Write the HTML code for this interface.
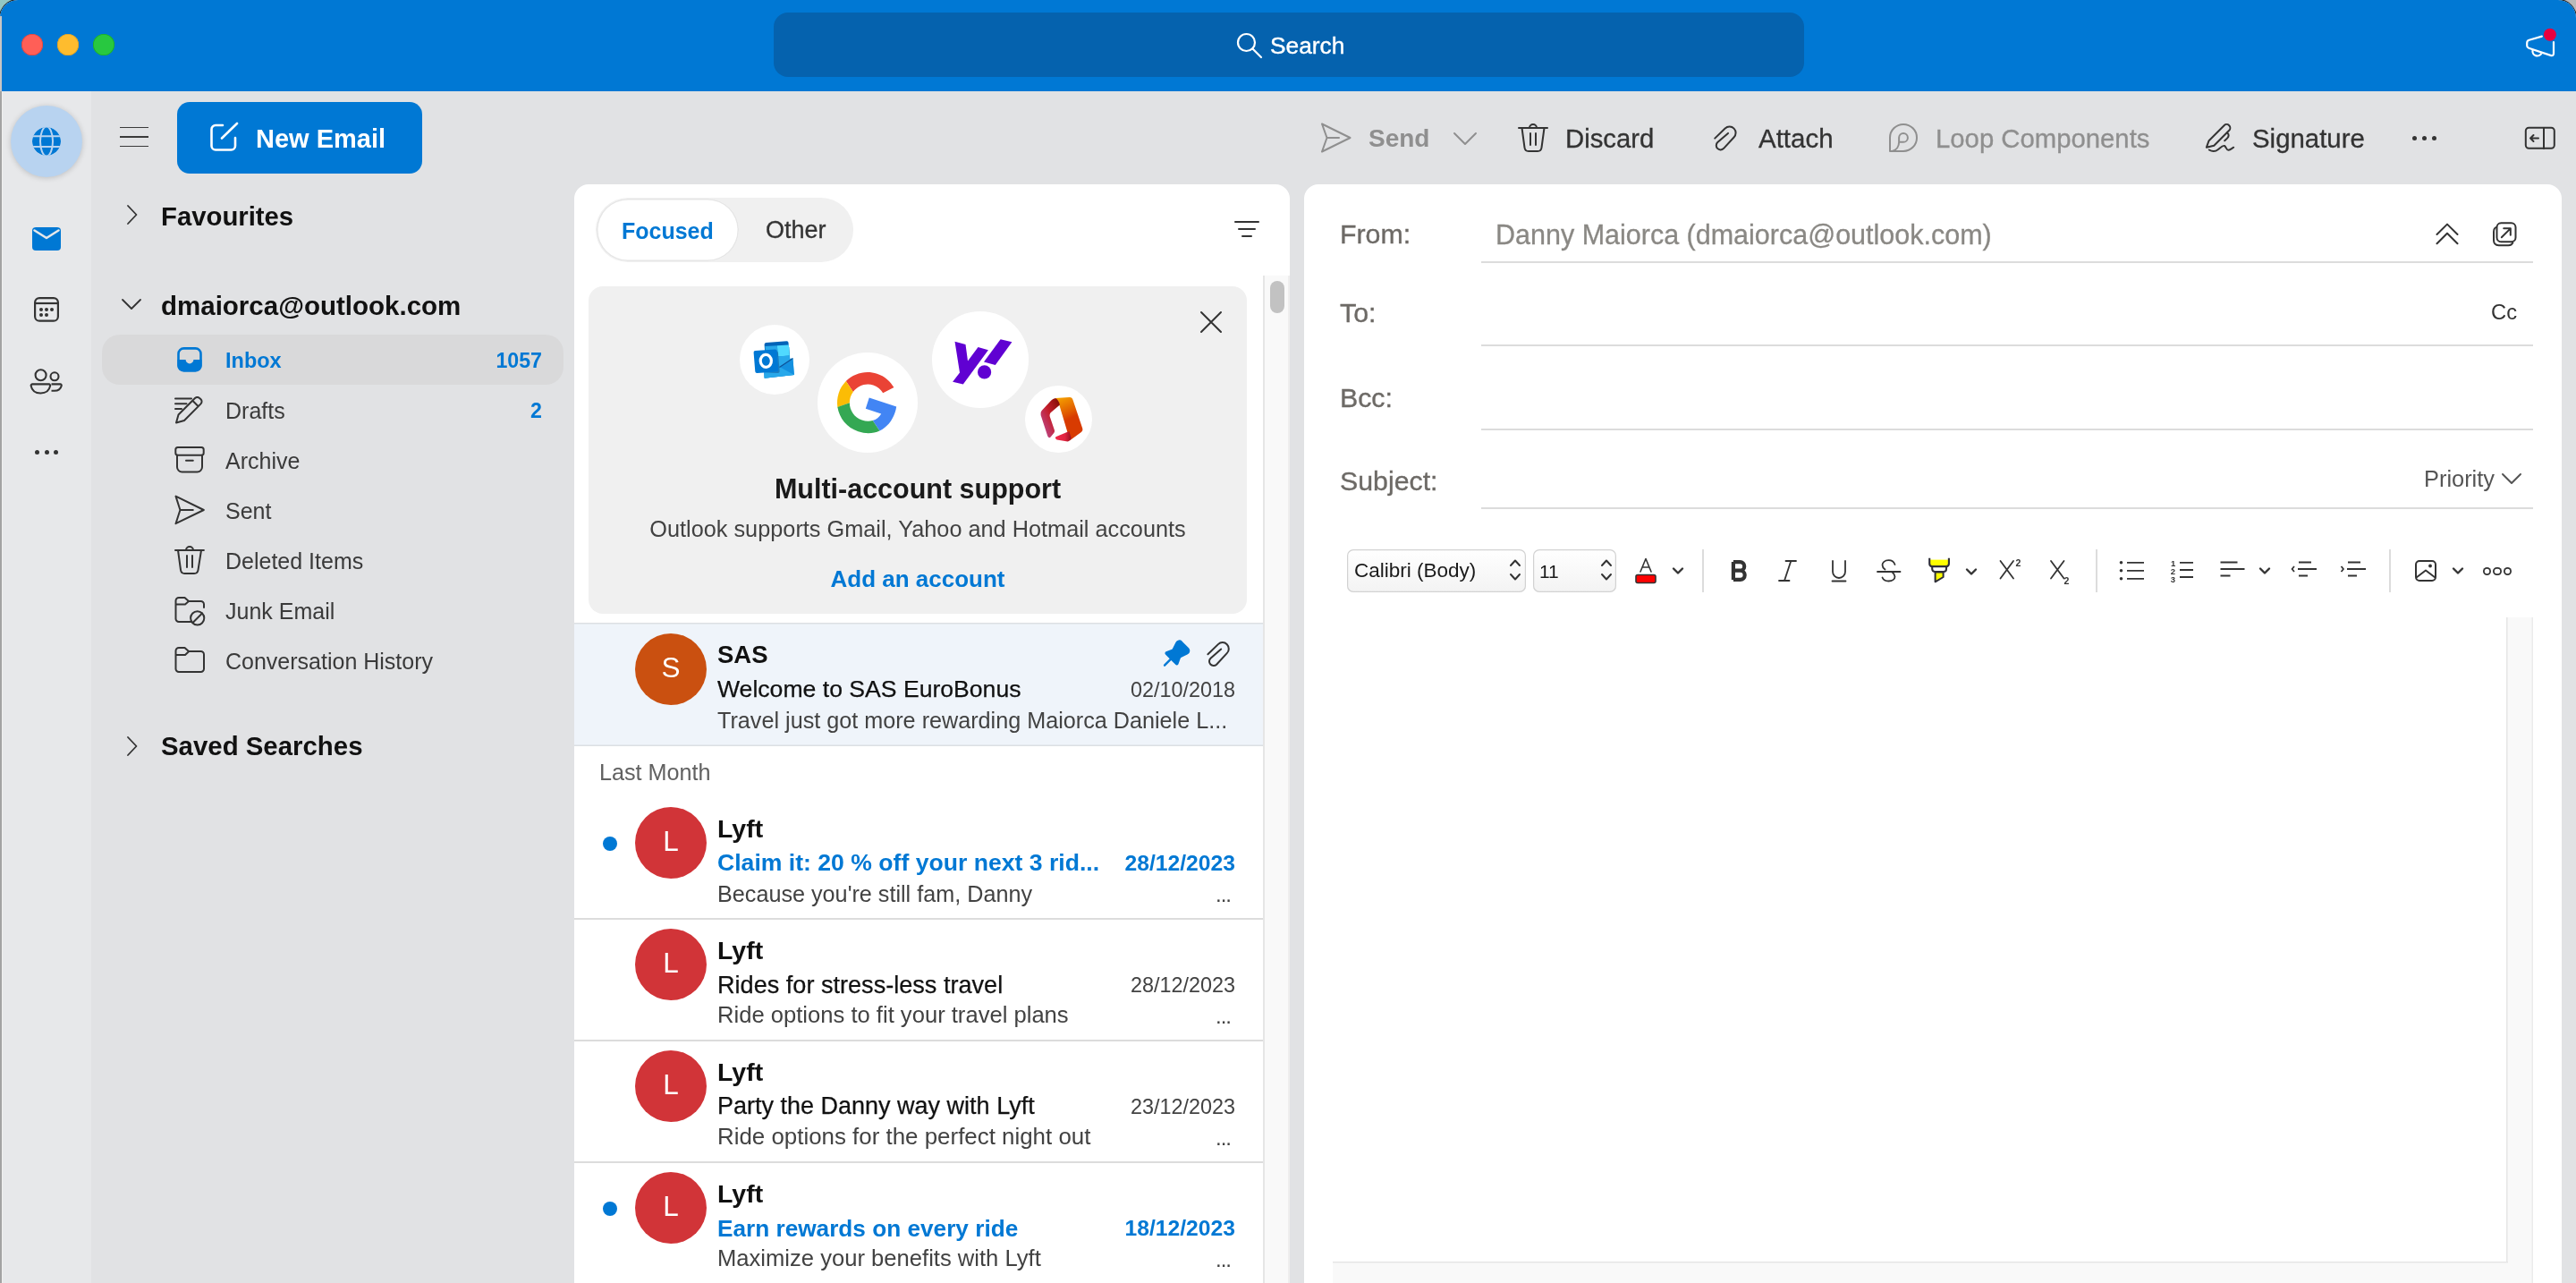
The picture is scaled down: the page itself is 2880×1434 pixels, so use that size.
<!DOCTYPE html>
<html><head><meta charset="utf-8"><style>
html,body{margin:0;padding:0;width:2880px;height:1434px;overflow:hidden;position:relative;font-family:"Liberation Sans", sans-serif;}
.t{position:absolute;white-space:nowrap;font-family:"Liberation Sans", sans-serif;will-change:transform;}
svg text{will-change:transform}
</style></head><body>
<div style="position:absolute;left:0;top:0;width:2880px;height:1434px;background:#b9b9b9"></div>
<div style="position:absolute;left:0;top:0;width:60px;height:60px;background:#93c8c4"></div>
<div style="position:absolute;left:0;top:0;width:2880px;height:1434px;background:#e1e2e4;border-radius:20px 20px 0 0;overflow:hidden;box-shadow:0 0 0 1px #1e1e1e">
<div style="position:absolute;left:0px;top:0px;width:2880px;height:102px;background:#0078d4"></div>
<div style="position:absolute;left:2px;top:102px;width:100px;height:1332px;background:#e7e8ea"></div>
<div style="position:absolute;left:0px;top:18px;width:2px;height:84px;background:#c9c6c3"></div>
<div style="position:absolute;left:0px;top:102px;width:2px;height:1332px;background:#a3a3a3"></div>
<div style="position:absolute;left:2px;top:102px;width:1px;height:1332px;background:#efefef"></div>
</div>
<div style="position:absolute;left:24px;top:38px;width:24px;height:24px;border-radius:50%;background:#ff5f57;box-shadow:inset 0 0 0 0.8px #e0443e"></div>
<div style="position:absolute;left:64px;top:38px;width:24px;height:24px;border-radius:50%;background:#febc2e;box-shadow:inset 0 0 0 0.8px #dea123"></div>
<div style="position:absolute;left:104px;top:38px;width:24px;height:24px;border-radius:50%;background:#28c840;box-shadow:inset 0 0 0 0.8px #1aab29"></div>
<div style="position:absolute;left:865px;top:14px;width:1152px;height:72px;background:#0562ae;border-radius:16px"></div>
<svg style="position:absolute;left:1382px;top:36px;" width="30" height="30" viewBox="0 0 30 30" fill="none"><circle cx="11.5" cy="11.5" r="9.5" stroke="#fff" stroke-width="2.2"/><path d="M18.5 18.5 L28 28" stroke="#fff" stroke-width="2.2" stroke-linecap="round"/></svg>
<div class="t" style="left:1420px;top:37.74px;font-size:26.3px;line-height:26.3px;font-weight:400;color:#ffffff;-webkit-text-stroke:0.4px #fff;">Search</div>
<svg style="position:absolute;left:2815px;top:28px;overflow:visible;" width="55" height="42" viewBox="2815 28 55 42" fill="none"><path d="M2841.9 40.6 L2827.6 44.8 Q2825.2 45.5 2825.2 48 V51 Q2825.2 53.1 2827.2 53.8 L2851.6 61.9 Q2855 62.9 2855 59.6 V47" stroke="#fff" stroke-width="2.2" stroke-linecap="round" stroke-linejoin="round"/><path d="M2831.6 55.9 A5.3 5.3 0 0 0 2841.5 59.5" stroke="#fff" stroke-width="2.2"/><circle cx="2850.9" cy="38.8" r="7" fill="#e8003f"/></svg>
<div style="position:absolute;left:12px;top:118px;width:80px;height:80px;border-radius:50%;background:#b8d3f0;box-shadow:0 1px 6px rgba(0,0,0,0.18)"></div>
<svg style="position:absolute;left:36px;top:142px;" width="32" height="32" viewBox="0 0 32 32" fill="none"><defs><clipPath id="gc"><circle cx="16" cy="16" r="16"/></clipPath></defs><g clip-path="url(#gc)"><circle cx="16" cy="16" r="16" fill="#0078d4"/><ellipse cx="16" cy="16" rx="7" ry="16.5" stroke="#b8d3f0" stroke-width="2"/><path d="M0 10.2 H32 M0 22 H32" stroke="#b8d3f0" stroke-width="2"/></g></svg>
<svg style="position:absolute;left:36px;top:254px;" width="32" height="26" viewBox="0 0 32 26" fill="none"><rect x="0" y="0" width="32" height="26" rx="4" fill="#0078d4"/><path d="M2.5 3.5 L16 12 L29.5 3.5" stroke="#e7e8ea" stroke-width="2.6" stroke-linecap="round" stroke-linejoin="round"/></svg>
<svg style="position:absolute;left:37px;top:331px;" width="30" height="30" viewBox="0 0 30 30" fill="none"><rect x="2.1" y="2.1" width="25.8" height="25.6" rx="5" stroke="#333" stroke-width="2.2"/><path d="M2 8 H28" stroke="#333" stroke-width="2.2"/><circle cx="9" cy="15" r="2" fill="#333"/><circle cx="15" cy="15" r="2" fill="#333"/><circle cx="21" cy="15" r="2" fill="#333"/><circle cx="9" cy="21" r="2" fill="#333"/><circle cx="15" cy="21" r="2" fill="#333"/></svg>
<svg style="position:absolute;left:33px;top:410px;" width="38" height="32" viewBox="0 0 38 32" fill="none"><circle cx="12.6" cy="9.3" r="6" stroke="#333" stroke-width="2.1"/><path d="M3 19.4 H21.7 a1.6 1.6 0 0 1 1.4 2 C22 26.5 18 29.5 12.4 29.5 C6.8 29.5 2.7 26.5 1.7 21.4 a1.6 1.6 0 0 1 1.3 -2 Z" stroke="#333" stroke-width="2.1" stroke-linejoin="round"/><circle cx="28" cy="10.8" r="4.5" stroke="#333" stroke-width="2.1"/><path d="M24.5 19.4 H34.3 a1.4 1.4 0 0 1 1.4 1.8 C34.7 24.9 31.7 26.7 28 26.7 H24.5" stroke="#333" stroke-width="2.1" stroke-linejoin="round"/></svg>
<div style="position:absolute;left:38.5px;top:503px;width:5px;height:5px;border-radius:50%;background:#333"></div>
<div style="position:absolute;left:49.5px;top:503px;width:5px;height:5px;border-radius:50%;background:#333"></div>
<div style="position:absolute;left:59.5px;top:503px;width:5px;height:5px;border-radius:50%;background:#333"></div>
<div style="position:absolute;left:134px;top:141.6px;width:32px;height:1.8000000000000114px;background:#3a3a3a"></div>
<div style="position:absolute;left:134px;top:152.1px;width:32px;height:1.8000000000000114px;background:#3a3a3a"></div>
<div style="position:absolute;left:134px;top:162.6px;width:32px;height:1.8000000000000114px;background:#3a3a3a"></div>
<div style="position:absolute;left:198px;top:114px;width:274px;height:80px;background:#0078d4;border-radius:14px"></div>
<svg style="position:absolute;left:234px;top:136px;" width="34" height="34" viewBox="0 0 34 34" fill="none"><path d="M15 4 H7 a4.5 4.5 0 0 0 -4.5 4.5 V27 a4.5 4.5 0 0 0 4.5 4.5 H24.5 a4.5 4.5 0 0 0 4.5 -4.5 V18" stroke="#fff" stroke-width="2.6" stroke-linecap="round"/><path d="M14 18.5 L31 2" stroke="#fff" stroke-width="2.6" stroke-linecap="round"/></svg>
<div class="t" style="left:286px;top:140.95px;font-size:29px;line-height:29px;font-weight:700;color:#ffffff;">New Email</div>
<svg style="position:absolute;left:138px;top:226px;" width="20" height="28" viewBox="0 0 20 28" fill="none"><path d="M5 4 L14.5 14 L5 24" stroke="#333" stroke-width="1.8" stroke-linecap="round" stroke-linejoin="round"/></svg>
<div class="t" style="left:180px;top:227.20px;font-size:29.3px;line-height:29.3px;font-weight:700;color:#111111;">Favourites</div>
<svg style="position:absolute;left:134px;top:330px;" width="26" height="20" viewBox="0 0 26 20" fill="none"><path d="M3 5 L13 15 L23 5" stroke="#333" stroke-width="1.8" stroke-linecap="round" stroke-linejoin="round"/></svg>
<div class="t" style="left:180px;top:327.03px;font-size:29.5px;line-height:29.5px;font-weight:700;color:#111111;">dmaiorca@outlook.com</div>
<div style="position:absolute;left:114px;top:374px;width:516px;height:56px;background:#d9d9da;border-radius:20px"></div>
<svg style="position:absolute;left:196px;top:386px;" width="32" height="32" viewBox="0 0 32 32" fill="none"><rect x="3.5" y="3.4" width="25" height="25" rx="6" stroke="#0078d4" stroke-width="2.6"/><path d="M2.5 16 H11.6 a4.4 4.4 0 0 0 8.8 0 H29.5 V23 a6 6 0 0 1 -6 6 H8.5 a6 6 0 0 1 -6 -6 Z" fill="#0078d4"/></svg>
<div class="t" style="left:252px;top:392.11px;font-size:23.5px;line-height:23.5px;font-weight:700;color:#0078d4;">Inbox</div>
<div class="t" style="left:606px;top:392.36px;font-size:23.2px;line-height:23.2px;font-weight:700;color:#0078d4;transform:translateX(-100%);">1057</div>
<div class="t" style="left:252px;top:446.84px;font-size:25px;line-height:25px;font-weight:400;color:#3a3a3a;">Drafts</div>
<div class="t" style="left:252px;top:502.84px;font-size:25px;line-height:25px;font-weight:400;color:#3a3a3a;">Archive</div>
<div class="t" style="left:252px;top:558.84px;font-size:25px;line-height:25px;font-weight:400;color:#3a3a3a;">Sent</div>
<div class="t" style="left:252px;top:614.84px;font-size:25px;line-height:25px;font-weight:400;color:#3a3a3a;">Deleted Items</div>
<div class="t" style="left:252px;top:670.84px;font-size:25px;line-height:25px;font-weight:400;color:#3a3a3a;">Junk Email</div>
<div class="t" style="left:252px;top:726.84px;font-size:25px;line-height:25px;font-weight:400;color:#3a3a3a;">Conversation History</div>
<div class="t" style="left:606px;top:448.36px;font-size:23.2px;line-height:23.2px;font-weight:700;color:#0078d4;transform:translateX(-100%);">2</div>
<svg style="position:absolute;left:194px;top:442.5px;" width="36" height="36" viewBox="0 0 36 36" fill="none"><path d="M2 2.5 H20 M2 8.3 H14.5 M2 14.1 H9" stroke="#333" stroke-width="2" stroke-linecap="round" stroke-linejoin="round"/><path d="M30.5 3.3 a3.6 3.6 0 0 1 0 5.1 L12 27 L3 29.5 L5.5 20.5 L24 2 a3.6 3.6 0 0 1 5.1 0 Z M21.5 5 L27 10.5" stroke="#333" stroke-width="2" stroke-linecap="round" stroke-linejoin="round"/></svg>
<svg style="position:absolute;left:194px;top:498px;" width="36" height="32" viewBox="0 0 36 32" fill="none"><rect x="2.3" y="2" width="31.4" height="8.7" rx="2.5" stroke="#333" stroke-width="2" stroke-linecap="round" stroke-linejoin="round"/><path d="M4 10.7 V24 a5.5 5.5 0 0 0 5.5 5.5 H26.5 a5.5 5.5 0 0 0 5.5 -5.5 V10.7 M14 16.8 H21.8" stroke="#333" stroke-width="2" stroke-linecap="round" stroke-linejoin="round"/></svg>
<svg style="position:absolute;left:194px;top:552px;" width="36" height="36" viewBox="0 0 36 36" fill="none"><path d="M2.5 2.6 L33.8 18 L2.5 33.2 L7.4 18 Z M7.4 18 H21.8" stroke="#333" stroke-width="2" stroke-linecap="round" stroke-linejoin="round"/></svg>
<svg style="position:absolute;left:194px;top:606px;" width="36" height="38" viewBox="0 0 36 38" fill="none"><path d="M2 9 H33.9 M5 9 L8 31 a4.5 4.5 0 0 0 4.5 4 H23 a4.5 4.5 0 0 0 4.5 -4 L31 9 M14 9 a4 4 0 0 1 8 0 M15 15 V28 M21 15 V28" stroke="#333" stroke-width="2" stroke-linecap="round" stroke-linejoin="round"/></svg>
<svg style="position:absolute;left:194px;top:666px;" width="38" height="34" viewBox="0 0 38 34" fill="none"><path d="M2.5 26 V5.5 a3.5 3.5 0 0 1 3.5 -3.5 H12.5 l4.5 4 H30.5 a3.5 3.5 0 0 1 3.5 3.5 V13 M2.5 9.5 H13 l4 -3.5 M20 29 H6 a3.5 3.5 0 0 1 -3.5 -3.5" stroke="#333" stroke-width="2" stroke-linecap="round" stroke-linejoin="round"/><circle cx="26.7" cy="24.8" r="7.6" stroke="#333" stroke-width="2" stroke-linecap="round" stroke-linejoin="round"/><path d="M21.5 30 L32 19.5" stroke="#333" stroke-width="2" stroke-linecap="round" stroke-linejoin="round"/></svg>
<svg style="position:absolute;left:194px;top:722px;" width="36" height="32" viewBox="0 0 36 32" fill="none"><path d="M2.5 26 V5.5 a3.5 3.5 0 0 1 3.5 -3.5 H12.5 l4.5 4 H30.5 a3.5 3.5 0 0 1 3.5 3.5 V25.5 a3.5 3.5 0 0 1 -3.5 3.5 H6 a3.5 3.5 0 0 1 -3.5 -3.5 M2.5 10 H13 l4 -3.8" stroke="#333" stroke-width="2" stroke-linecap="round" stroke-linejoin="round"/></svg>
<svg style="position:absolute;left:138px;top:820px;" width="20" height="28" viewBox="0 0 20 28" fill="none"><path d="M5 4 L14.5 14 L5 24" stroke="#333" stroke-width="1.8" stroke-linecap="round" stroke-linejoin="round"/></svg>
<div class="t" style="left:180px;top:819.11px;font-size:29.4px;line-height:29.4px;font-weight:700;color:#111111;">Saved Searches</div>
<div style="position:absolute;left:642px;top:206px;width:800px;height:1228px;background:#ffffff;border-radius:16px 16px 0 0"></div>
<div style="position:absolute;left:666px;top:221px;width:288px;height:72px;background:#f0f0f0;border-radius:36px"></div>
<div style="position:absolute;left:667px;top:222px;width:159px;height:70px;background:#ffffff;border-radius:35px;box-shadow:inset 0 0 0 1.5px #e6e6e6"></div>
<div class="t" style="left:695px;top:245.84px;font-size:25px;line-height:25px;font-weight:700;color:#0078d4;">Focused</div>
<div class="t" style="left:856px;top:244.14px;font-size:27px;line-height:27px;font-weight:400;color:#333333;-webkit-text-stroke:0.3px #333;">Other</div>
<div style="position:absolute;left:1380px;top:247px;width:28px;height:2px;background:#333;border-radius:1px"></div>
<div style="position:absolute;left:1384px;top:255px;width:20px;height:2px;background:#333;border-radius:1px"></div>
<div style="position:absolute;left:1388px;top:263px;width:12px;height:2px;background:#333;border-radius:1px"></div>
<div style="position:absolute;left:1412px;top:308px;width:30px;height:1126px;background:#f9f9f9;box-shadow:inset 2px 0 0 #e6e6e6, inset -2px 0 0 #eeeeee"></div>
<div style="position:absolute;left:1420px;top:314px;width:16px;height:36px;background:#c2c2c2;border-radius:8px"></div>
<div style="position:absolute;left:658px;top:320px;width:736px;height:366px;background:#f0f0f0;border-radius:16px"></div>
<svg style="position:absolute;left:1340px;top:346px;" width="28" height="28" viewBox="0 0 28 28" fill="none"><path d="M3 3 L25 25 M25 3 L3 25" stroke="#333" stroke-width="2" stroke-linecap="round"/></svg>
<div style="position:absolute;left:827.4px;top:363.4px;width:78px;height:78px;border-radius:50%;background:#fff"></div>
<div style="position:absolute;left:913.5px;top:393.7px;width:112px;height:112px;border-radius:50%;background:#fff"></div>
<div style="position:absolute;left:1041.8px;top:347.8px;width:108px;height:108px;border-radius:50%;background:#fff"></div>
<div style="position:absolute;left:1146.2px;top:430.9px;width:75.0px;height:75.0px;border-radius:50%;background:#fff"></div>
<svg style="position:absolute;left:838px;top:375px;overflow:visible;" width="55" height="55" viewBox="838 375 55 55" fill="none"><path d="M855.6 390 L882.4 388 L883.2 400.8 L886.4 400.6 L887.9 419 L854.6 422.7 Z" fill="#28a8ea"/><path d="M854.6 385.2 Q854.5 383.2 856.4 383 L879.5 381.3 Q881.4 381.2 881.5 383.1 L882.6 397.8 L855.6 399.8 Z" fill="#0364b8"/><path d="M868.9 386.3 L881.9 385.4 L882.7 397.6 L869.7 398.5 Z" fill="#50d9ff"/><path d="M855.4 387 L868.9 386.3 L869.7 398.5 L856.2 399.3 Z" fill="#28a8ea"/><path d="M856.2 399.3 L882.7 397.6 L883.3 406 L857 410 Z" fill="#28a8ea"/><path d="M871.4 410.1 L886.4 400.3 L887.9 419 L854.6 422.7 Q853.3 412 856 410 Z" fill="#1490df"/><path d="M856 410.5 L871.4 410.1 L887.9 419 L856.4 422.6 Q854.6 422.6 854.5 420.8 Z" fill="#28a8ea"/><path d="M871.4 410.6 L886.4 400.6" stroke="#0a2767" stroke-width="1.2" opacity="0.6"/><path d="M844.4 392 L866.6 390.5 Q868.5 390.4 868.7 392.3 L870.4 413.6 Q870.5 415.5 868.6 415.6 L846.4 417.1 Q844.5 417.2 844.3 415.3 L842.6 394 Q842.5 392.1 844.4 392 Z" fill="#0078d4"/><path d="M868.7 392.3 L870.4 413.6 Q870.5 415.5 868.6 415.6 L856 416.4 L870 417 Q871.8 416.8 871.6 414.8 L870 394 Z" fill="#0a2767" opacity="0.35"/><ellipse cx="856.3" cy="403.3" rx="6.1" ry="7" stroke="#fff" stroke-width="3.2" transform="rotate(-4 856.4 403.4)"/></svg>
<svg style="position:absolute;left:936px;top:416.3px;overflow:visible" width="68" height="68" viewBox="0 0 48 48"><g transform="rotate(18 24 24)"><path fill="#EA4335" d="M24 9.5c3.54 0 6.71 1.22 9.21 3.6l6.85-6.85C35.9 2.38 30.47 0 24 0 14.62 0 6.51 5.38 2.56 13.22l7.98 6.19C12.43 13.72 17.74 9.5 24 9.5z"/><path fill="#4285F4" d="M46.98 24.55c0-1.57-.15-3.09-.38-4.55H24v9.02h12.94c-.58 2.96-2.26 5.48-4.78 7.18l7.73 6c4.51-4.18 7.09-10.36 7.09-17.650z"/><path fill="#FBBC05" d="M10.53 28.59c-.48-1.45-.76-2.99-.76-4.59s.27-3.14.76-4.59l-7.980-6.19C.92 16.46 0 20.12 0 24c0 3.88.92 7.54 2.56 10.78l7.97-6.19z"/><path fill="#34A853" d="M24 48c6.48 0 11.93-2.13 15.89-5.81l-7.73-6c-2.15 1.45-4.92 2.3-8.16 2.3-6.26 0-11.57-4.22-13.47-9.91l-7.98 6.19C6.51 42.62 14.62 48 24 48z"/></g></svg>
<svg style="position:absolute;left:1055px;top:370px;overflow:visible;" width="85" height="70" viewBox="1055 370 85 70" fill="none"><path d="M1067.5 381.7 L1079.5 385 L1082 403.6 L1093.5 388 L1104.9 391.3 L1076.8 429.5 L1065.1 426.7 L1073 416.4 Z" fill="#6001d2"/><path d="M1118.6 379.3 L1131.4 382.3 L1112.8 407.9 L1100 404.6 Z" fill="#6001d2"/><circle cx="1100.6" cy="415.9" r="7.6" fill="#6001d2"/></svg>
<svg style="position:absolute;left:1155px;top:438px;overflow:visible;" width="60" height="60" viewBox="1155 438 60 60" fill="none"><defs><linearGradient id="og1" x1="0" y1="0" x2="0.3" y2="1"><stop offset="0" stop-color="#f7a800"/><stop offset="0.45" stop-color="#e05a00"/><stop offset="0.6" stop-color="#d83b01"/><stop offset="1" stop-color="#d83b01"/></linearGradient><linearGradient id="og2" x1="1" y1="0" x2="0" y2="1"><stop offset="0" stop-color="#7a0c00"/><stop offset="0.45" stop-color="#c41e2a"/><stop offset="1" stop-color="#b956a8"/></linearGradient><linearGradient id="og3" x1="0" y1="0" x2="1" y2="0"><stop offset="0" stop-color="#f0294a"/><stop offset="0.6" stop-color="#e0243f"/><stop offset="1" stop-color="#9a0f20"/></linearGradient></defs><path d="M1180 445 L1195.7 444.1 Q1198.6 444 1199.6 447.2 L1210.2 478.8 Q1211 481.6 1208.5 483.3 L1196.2 492.3 L1183 448.3 Z" fill="url(#og1)"/><path d="M1180 445 Q1177 445.5 1175.3 447.5 L1164.6 459 Q1162.8 461.2 1163.6 464 L1171.3 487.5 Q1172.8 490.8 1175 488 L1178.4 483.8 Q1179.4 482.5 1178.9 480.8 L1173.7 465.5 Q1173 462.5 1175.5 460.6 L1184.9 452.5 Q1183.5 446.5 1180 445 Z" fill="url(#og2)"/><path d="M1180.3 488.3 L1195.3 482 L1197.6 489.6 Q1196.5 493.5 1193.5 493.4 L1181.6 491.4 Q1179.2 490.4 1180.3 488.3 Z" fill="url(#og3)"/></svg>
<div class="t" style="left:1026px;top:531.18px;font-size:30.5px;line-height:30.5px;font-weight:700;color:#1a1a1a;transform:translateX(-50%);">Multi-account support</div>
<div class="t" style="left:1026px;top:579.18px;font-size:25.3px;line-height:25.3px;font-weight:400;color:#424242;transform:translateX(-50%);">Outlook supports Gmail, Yahoo and Hotmail accounts</div>
<div class="t" style="left:1026px;top:633.99px;font-size:26px;line-height:26px;font-weight:700;color:#0078d4;transform:translateX(-50%);">Add an account</div>
<div style="position:absolute;left:642px;top:696px;width:770px;height:138px;background:#eff4fa;box-shadow:inset 0 1.5px 0 #dcdfe3, inset 0 -1.5px 0 #dcdfe3"></div>
<div style="position:absolute;left:710px;top:708px;width:80px;height:80px;border-radius:50%;background:#ca5010"></div>
<div class="t" style="left:750px;top:730.84px;font-size:31.5px;line-height:31.5px;font-weight:400;color:#ffffff;transform:translateX(-50%);">S</div>
<div class="t" style="left:802px;top:718.02px;font-size:27.5px;line-height:27.5px;font-weight:700;color:#111111;">SAS</div>
<div class="t" style="left:802px;top:757.08px;font-size:26.6px;line-height:26.6px;font-weight:400;color:#111111;-webkit-text-stroke:0.25px #111;">Welcome to SAS EuroBonus</div>
<div class="t" style="left:1381px;top:759.79px;font-size:23.4px;line-height:23.4px;font-weight:400;color:#424242;transform:translateX(-100%);">02/10/2018</div>
<div class="t" style="left:802px;top:792.87px;font-size:25.2px;line-height:25.2px;font-weight:400;color:#424242;">Travel just got more rewarding Maiorca Daniele L...</div>
<svg style="position:absolute;left:1295.6px;top:712px;overflow:visible" width="37.7" height="37.7" viewBox="0 0 24 24"><path fill="#0078d4" d="M16.24 2.93a2.75 2.75 0 0 0-4.4.71L9.43 8.46a.75.75 0 0 1-.42.37l-4.1 1.5a1.25 1.25 0 0 0-.45 2.06L7.44 15.500 3.3 19.64a.75.75 0 0 0 1.06 1.06L8.5 16.560l3.1 3.100a1.25 1.25 0 0 0 2.06-.46l1.5-4.1a.75.75 0 0 1 .37-.42l4.82-2.41a2.750 2.750 0 0 0 .71-4.4l-4.820-4.830Z"/></svg>
<svg style="position:absolute;left:1340px;top:710px;overflow:visible;" width="45" height="40" viewBox="1340 710 45 40" fill="none"><path d="M1350.4 731.2 L1361.9 720.1 A7 7 0 0 1 1371.7 730.1 L1360.1 742.7 A4.8 4.8 0 0 1 1353.5 735.7 L1365.2 725.5" stroke="#333" stroke-width="2" stroke-linecap="round"/></svg>
<div class="t" style="left:670px;top:851.07px;font-size:25.2px;line-height:25.2px;font-weight:400;color:#616161;">Last Month</div>
<div style="position:absolute;left:642px;top:1026px;width:770px;height:2px;background:#dcdcdc"></div>
<div style="position:absolute;left:674px;top:935px;width:16px;height:16px;border-radius:50%;background:#0078d4"></div>
<div style="position:absolute;left:710px;top:902px;width:80px;height:80px;border-radius:50%;background:#d13438"></div>
<div class="t" style="left:750px;top:924.84px;font-size:31.5px;line-height:31.5px;font-weight:400;color:#ffffff;transform:translateX(-50%);">L</div>
<div class="t" style="left:802px;top:911.87px;font-size:28.5px;line-height:28.5px;font-weight:700;color:#111111;">Lyft</div>
<div class="t" style="left:802px;top:951.18px;font-size:26.6px;line-height:26.6px;font-weight:700;color:#0078d4;">Claim it: 20 % off your next 3 rid...</div>
<div class="t" style="left:1381px;top:952.79px;font-size:24.7px;line-height:24.7px;font-weight:700;color:#0078d4;transform:translateX(-100%);">28/12/2023</div>
<div class="t" style="left:802px;top:986.67px;font-size:25.2px;line-height:25.2px;font-weight:400;color:#424242;">Because you're still fam, Danny</div>
<div class="t" style="left:1376px;top:987.68px;font-size:24px;line-height:24px;font-weight:400;color:#424242;transform:translateX(-100%);letter-spacing:-1px;">...</div>
<div style="position:absolute;left:642px;top:1162px;width:770px;height:2px;background:#dcdcdc"></div>
<div style="position:absolute;left:710px;top:1038px;width:80px;height:80px;border-radius:50%;background:#d13438"></div>
<div class="t" style="left:750px;top:1060.84px;font-size:31.5px;line-height:31.5px;font-weight:400;color:#ffffff;transform:translateX(-50%);">L</div>
<div class="t" style="left:802px;top:1047.87px;font-size:28.5px;line-height:28.5px;font-weight:700;color:#111111;">Lyft</div>
<div class="t" style="left:802px;top:1086.76px;font-size:27.1px;line-height:27.1px;font-weight:400;color:#111111;-webkit-text-stroke:0.25px #111;">Rides for stress-less travel</div>
<div class="t" style="left:1381px;top:1089.89px;font-size:23.4px;line-height:23.4px;font-weight:400;color:#424242;transform:translateX(-100%);">28/12/2023</div>
<div class="t" style="left:802px;top:1122.33px;font-size:25.6px;line-height:25.6px;font-weight:400;color:#424242;">Ride options to fit your travel plans</div>
<div class="t" style="left:1376px;top:1123.68px;font-size:24px;line-height:24px;font-weight:400;color:#424242;transform:translateX(-100%);letter-spacing:-1px;">...</div>
<div style="position:absolute;left:642px;top:1298px;width:770px;height:2px;background:#dcdcdc"></div>
<div style="position:absolute;left:710px;top:1174px;width:80px;height:80px;border-radius:50%;background:#d13438"></div>
<div class="t" style="left:750px;top:1196.84px;font-size:31.5px;line-height:31.5px;font-weight:400;color:#ffffff;transform:translateX(-50%);">L</div>
<div class="t" style="left:802px;top:1183.87px;font-size:28.5px;line-height:28.5px;font-weight:700;color:#111111;">Lyft</div>
<div class="t" style="left:802px;top:1222.84px;font-size:27.0px;line-height:27.0px;font-weight:400;color:#111111;-webkit-text-stroke:0.25px #111;">Party the Danny way with Lyft</div>
<div class="t" style="left:1381px;top:1225.89px;font-size:23.4px;line-height:23.4px;font-weight:400;color:#424242;transform:translateX(-100%);">23/12/2023</div>
<div class="t" style="left:802px;top:1258.08px;font-size:25.9px;line-height:25.9px;font-weight:400;color:#424242;">Ride options for the perfect night out</div>
<div class="t" style="left:1376px;top:1259.68px;font-size:24px;line-height:24px;font-weight:400;color:#424242;transform:translateX(-100%);letter-spacing:-1px;">...</div>
<div style="position:absolute;left:642px;top:1434px;width:770px;height:2px;background:#dcdcdc"></div>
<div style="position:absolute;left:674px;top:1343px;width:16px;height:16px;border-radius:50%;background:#0078d4"></div>
<div style="position:absolute;left:710px;top:1310px;width:80px;height:80px;border-radius:50%;background:#d13438"></div>
<div class="t" style="left:750px;top:1332.84px;font-size:31.5px;line-height:31.5px;font-weight:400;color:#ffffff;transform:translateX(-50%);">L</div>
<div class="t" style="left:802px;top:1319.87px;font-size:28.5px;line-height:28.5px;font-weight:700;color:#111111;">Lyft</div>
<div class="t" style="left:802px;top:1359.52px;font-size:26.2px;line-height:26.2px;font-weight:700;color:#0078d4;">Earn rewards on every ride</div>
<div class="t" style="left:1381px;top:1360.79px;font-size:24.7px;line-height:24.7px;font-weight:700;color:#0078d4;transform:translateX(-100%);">18/12/2023</div>
<div class="t" style="left:802px;top:1394.33px;font-size:25.6px;line-height:25.6px;font-weight:400;color:#424242;">Maximize your benefits with Lyft</div>
<div class="t" style="left:1376px;top:1395.68px;font-size:24px;line-height:24px;font-weight:400;color:#424242;transform:translateX(-100%);letter-spacing:-1px;">...</div>
<svg style="position:absolute;left:1474px;top:134px;" width="40" height="40" viewBox="0 0 40 40" fill="none"><path d="M4 4.5 L35.5 20 L4 35.5 L9.5 20 Z M9.5 20 H23" stroke="#8f8f8f" stroke-width="2" stroke-linejoin="round" stroke-linecap="round"/></svg>
<div class="t" style="left:1530px;top:141.30px;font-size:28px;line-height:28px;font-weight:700;color:#8f8f8f;">Send</div>
<svg style="position:absolute;left:1622px;top:144px;" width="32" height="22" viewBox="0 0 32 22" fill="none"><path d="M4 5 L16 17 L28 5" stroke="#8f8f8f" stroke-width="2" stroke-linecap="round" stroke-linejoin="round"/></svg>
<svg style="position:absolute;left:1694px;top:133px;" width="40" height="40" viewBox="0 0 40 40" fill="none"><path d="M4 10 H36 M7.5 10 L10.5 32 a4.5 4.5 0 0 0 4.5 4 H25 a4.5 4.5 0 0 0 4.5 -4 L32.5 10 M16 10 a4 4 0 0 1 8 0 M17 16 V29 M23 16 V29" stroke="#333" stroke-width="2" stroke-linecap="round" stroke-linejoin="round"/></svg>
<div class="t" style="left:1750px;top:140.20px;font-size:29.3px;line-height:29.3px;font-weight:400;color:#333333;-webkit-text-stroke:0.3px #333;">Discard</div>
<svg style="position:absolute;left:1905px;top:130px;overflow:visible;" width="45" height="45" viewBox="1905 130 45 45" fill="none"><g transform="translate(566.8 -576.6)"><path d="M1350.4 731.2 L1361.9 720.1 A7 7 0 0 1 1371.7 730.1 L1360.1 742.7 A4.8 4.8 0 0 1 1353.5 735.7 L1365.2 725.5" stroke="#333" stroke-width="2" stroke-linecap="round"/></g></svg>
<div class="t" style="left:1966px;top:140.03px;font-size:29.5px;line-height:29.5px;font-weight:400;color:#333333;-webkit-text-stroke:0.3px #333;">Attach</div>
<svg style="position:absolute;left:2105px;top:130px;overflow:visible;" width="45" height="46" viewBox="2105 130 45 46" fill="none"><path d="M2113 168.9 V153.9 A15 15 0 1 1 2128 168.9 Z" stroke="#8f8f8f" stroke-width="2" stroke-linejoin="round"/><path d="M2123.1 153.9 A4.9 4.9 0 1 1 2128 158.8 H2123.1 V153.9 M2123.1 158.8 C2123.1 163.5 2120.5 167.8 2115.5 168.9" stroke="#8f8f8f" stroke-width="2"/></svg>
<div class="t" style="left:2164px;top:140.20px;font-size:29.3px;line-height:29.3px;font-weight:400;color:#8f8f8f;-webkit-text-stroke:0.3px #8f8f8f;">Loop Components</div>
<svg style="position:absolute;left:2460px;top:132px;overflow:visible;" width="45" height="44" viewBox="2460 132 45 44" fill="none"><path d="M2469.6 157.2 L2486.6 140.2 A3.95 3.95 0 0 1 2492.2 145.8 L2475.3 162.7 L2466.9 164.7 Z" stroke="#333" stroke-width="2" stroke-linejoin="round"/><path d="M2490 148.6 C2492.4 150 2492 152.6 2490 154.6 L2487.2 157.3 M2469.8 167.5 C2473 169.5 2477 169.5 2480 167 C2483 164.5 2485 162.2 2487 163 C2489 164 2489 168 2491.5 167.8 C2493.5 167.5 2495.5 165.6 2497.2 164.7" stroke="#333" stroke-width="2" stroke-linecap="round"/></svg>
<div class="t" style="left:2518px;top:140.11px;font-size:29.4px;line-height:29.4px;font-weight:400;color:#333333;-webkit-text-stroke:0.3px #333;">Signature</div>
<div style="position:absolute;left:2696.5px;top:151.5px;width:5px;height:5px;border-radius:50%;background:#333"></div>
<div style="position:absolute;left:2707.5px;top:151.5px;width:5px;height:5px;border-radius:50%;background:#333"></div>
<div style="position:absolute;left:2718.5px;top:151.5px;width:5px;height:5px;border-radius:50%;background:#333"></div>
<svg style="position:absolute;left:2822px;top:141px;" width="36" height="28" viewBox="0 0 36 28" fill="none"><rect x="1.8" y="1.8" width="32" height="23" rx="3.5" stroke="#333" stroke-width="2"/><path d="M22 2 V25 M16 13.5 H7 M10.5 10 L7 13.5 L10.5 17" stroke="#333" stroke-width="2" stroke-linecap="round" stroke-linejoin="round"/></svg>
<div style="position:absolute;left:1458px;top:206px;width:1406px;height:1228px;background:#ffffff;border-radius:16px 16px 0 0"></div>
<div class="t" style="left:1498px;top:247.05px;font-size:30.3px;line-height:30.3px;font-weight:400;color:#6d6a66;-webkit-text-stroke:0.35px #6d6a66;">From:</div>
<div class="t" style="left:1672px;top:246.88px;font-size:30.5px;line-height:30.5px;font-weight:400;color:#8a8884;-webkit-text-stroke:0.3px #8a8884;">Danny Maiorca (dmaiorca@outlook.com)</div>
<div class="t" style="left:1498px;top:335.25px;font-size:30.3px;line-height:30.3px;font-weight:400;color:#6d6a66;-webkit-text-stroke:0.35px #6d6a66;">To:</div>
<div class="t" style="left:1498px;top:429.75px;font-size:30.3px;line-height:30.3px;font-weight:400;color:#6d6a66;-webkit-text-stroke:0.35px #6d6a66;">Bcc:</div>
<div class="t" style="left:1498px;top:523.15px;font-size:30.3px;line-height:30.3px;font-weight:400;color:#6d6a66;-webkit-text-stroke:0.35px #6d6a66;">Subject:</div>
<div style="position:absolute;left:1656px;top:292px;width:1176px;height:2px;background:#dcdcdc"></div>
<div style="position:absolute;left:1656px;top:385px;width:1176px;height:2px;background:#dcdcdc"></div>
<div style="position:absolute;left:1656px;top:479px;width:1176px;height:2px;background:#dcdcdc"></div>
<div style="position:absolute;left:1656px;top:567px;width:1176px;height:2px;background:#dcdcdc"></div>
<svg style="position:absolute;left:2715px;top:242px;overflow:visible;" width="40" height="38" viewBox="2715 242 40 38" fill="none"><path d="M2724.5 262 L2736 250.6 L2747.5 262 M2724.5 272.2 L2736 260.8 L2747.5 272.2" stroke="#333" stroke-width="2" stroke-linecap="round" stroke-linejoin="round"/></svg>
<svg style="position:absolute;left:2780px;top:242px;overflow:visible;" width="40" height="40" viewBox="2780 242 40 40" fill="none"><rect x="2791.5" y="249.3" width="21" height="21" rx="4.8" stroke="#333" stroke-width="2"/><path d="M2791.6 253.6 Q2788 254.6 2788 259 V268.6 Q2788 274.2 2793.6 274.2 H2804.5 Q2808.3 274.2 2809.6 270.6" stroke="#333" stroke-width="2"/><path d="M2796.8 265.3 L2806.5 255.6 M2799.2 255.2 H2806.8 V262.8" stroke="#333" stroke-width="2" stroke-linecap="round" stroke-linejoin="round"/></svg>
<div class="t" style="left:2814px;top:337.94px;font-size:23.7px;line-height:23.7px;font-weight:400;color:#333333;transform:translateX(-100%);">Cc</div>
<div class="t" style="left:2710px;top:522.70px;font-size:25.4px;line-height:25.4px;font-weight:400;color:#555555;">Priority</div>
<svg style="position:absolute;left:2795px;top:526px;" width="26" height="20" viewBox="0 0 26 20" fill="none"><path d="M3 4 L13 14 L23 4" stroke="#555" stroke-width="2" stroke-linecap="round" stroke-linejoin="round"/></svg>
<div style="position:absolute;left:1506px;top:614px;width:200px;height:48px;background:linear-gradient(#ffffff,#f3f3f3);border-radius:7px;box-shadow:inset 0 0 0 1.2px #d2d2d2"></div>
<div style="position:absolute;left:1714px;top:614px;width:93px;height:48px;background:linear-gradient(#ffffff,#f3f3f3);border-radius:7px;box-shadow:inset 0 0 0 1.2px #d2d2d2"></div>
<div class="t" style="left:1514px;top:626.95px;font-size:22.5px;line-height:22.5px;font-weight:400;color:#1a1a1a;">Calibri (Body)</div>
<div class="t" style="left:1721px;top:628.22px;font-size:21px;line-height:21px;font-weight:400;color:#1a1a1a;">11</div>
<svg style="position:absolute;left:1687px;top:623px;" width="14" height="28" viewBox="0 0 14 28" fill="none"><path d="M2 9 L7 3.5 L12 9 M2 19 L7 24.5 L12 19" stroke="#333" stroke-width="2" stroke-linecap="round" stroke-linejoin="round"/></svg>
<svg style="position:absolute;left:1789px;top:623px;" width="14" height="28" viewBox="0 0 14 28" fill="none"><path d="M2 9 L7 3.5 L12 9 M2 19 L7 24.5 L12 19" stroke="#333" stroke-width="2" stroke-linecap="round" stroke-linejoin="round"/></svg>
<svg style="position:absolute;left:1826px;top:622px;" width="28" height="32" viewBox="0 0 28 32" fill="none"><path d="M8 17 L14 2.5 L20 17 M10 12 H18" stroke="#333" stroke-width="1.6" stroke-linecap="round" stroke-linejoin="round"/><rect x="3" y="20.5" width="22" height="9" rx="2" fill="#ff0000" stroke="#333" stroke-width="1.6"/></svg>
<svg style="position:absolute;left:1869px;top:633px;" width="14" height="11" viewBox="0 0 14 11" fill="none"><path d="M2 2.5 L7 7.5 L12 2.5" stroke="#333" stroke-width="2.4" stroke-linecap="round" stroke-linejoin="round"/></svg>
<div style="position:absolute;left:1903px;top:614px;width:2px;height:48px;background:#dcdcdc"></div>
<svg style="position:absolute;left:1930px;top:620px;overflow:visible;" width="30" height="36" viewBox="1930 620 30 36" fill="none"><path d="M1937.9 628.1 V647.9 M1937.9 628.1 H1945.4 A4.8 4.8 0 0 1 1945.4 637.7 H1937.9 M1937.9 637.7 H1945.6 A5.1 5.1 0 0 1 1945.6 647.9 H1937.9" stroke="#333" stroke-width="4.2" stroke-linejoin="round"/></svg>
<svg style="position:absolute;left:1986px;top:624px;" width="28" height="28" viewBox="0 0 28 28" fill="none"><path d="M10.5 3 H22 M3 25 H14.5 M16.3 3 L9 25" stroke="#333" stroke-width="1.8" stroke-linecap="round"/></svg>
<svg style="position:absolute;left:2046px;top:624px;" width="20" height="28" viewBox="0 0 20 28" fill="none"><path d="M3 3 V15 a7 7 0 0 0 14 0 V3 M2.5 25.5 H17.5" stroke="#333" stroke-width="1.8" stroke-linecap="round"/></svg>
<svg style="position:absolute;left:2097px;top:624px;" width="30" height="28" viewBox="0 0 30 28" fill="none"><path d="M21.5 7 C20 3 17 2.2 14.5 2.2 C10 2.2 7.5 4.8 7.5 7.5 C7.5 9.5 8.5 11 10.5 12.5 M2 15 H27.5 M18.5 15.5 C20.5 17 21.5 18.5 21.5 20.5 C21.5 23.5 18.5 25.5 14.5 25.5 C11 25.5 8.5 24 7.5 21.5" stroke="#333" stroke-width="1.8" stroke-linecap="round"/></svg>
<svg style="position:absolute;left:2150px;top:618px;overflow:visible;" width="36" height="38" viewBox="2150 618 36 38" fill="none"><rect x="2158" y="625.6" width="20" height="6.8" fill="#ffff00"/><path d="M2157.2 623.8 V630 Q2157.2 633.1 2160.3 633.1 H2175.8 Q2178.9 633.1 2178.9 630 V623.8" stroke="#2f2f38" stroke-width="2.1"/><path d="M2160.2 633.1 V636 Q2160.4 639 2163.4 639 H2173 Q2176 639 2176 636 V633.1" stroke="#2f2f38" stroke-width="2.1"/><path d="M2163.6 639.5 V650.3 L2172.6 645 V639.5 Z" fill="#ffff00" stroke="#2f2f38" stroke-width="2" stroke-linejoin="round"/></svg>
<svg style="position:absolute;left:2197px;top:633.5px;" width="14" height="11" viewBox="0 0 14 11" fill="none"><path d="M2 2.5 L7 7.5 L12 2.5" stroke="#333" stroke-width="2.4" stroke-linecap="round" stroke-linejoin="round"/></svg>
<svg style="position:absolute;left:2233px;top:622px;" width="30" height="28" viewBox="0 0 30 28" fill="none"><path d="M3.5 5 L18 24.5 M18 5 L3.5 24.5" stroke="#333" stroke-width="1.8" stroke-linecap="round"/><text x="20.5" y="11" font-family="Liberation Sans" font-size="10.5" font-weight="700" fill="#333">2</text></svg>
<svg style="position:absolute;left:2290px;top:624px;" width="30" height="30" viewBox="0 0 30 30" fill="none"><path d="M3 3 L17.5 22.5 M17.5 3 L3 22.5" stroke="#333" stroke-width="1.8" stroke-linecap="round"/><text x="17.5" y="28.5" font-family="Liberation Sans" font-size="10.5" font-weight="700" fill="#333">2</text></svg>
<div style="position:absolute;left:2343px;top:614px;width:2px;height:48px;background:#dcdcdc"></div>
<svg style="position:absolute;left:2368px;top:625px;" width="32" height="28" viewBox="0 0 32 28" fill="none"><circle cx="3.5" cy="3.8" r="1.8" fill="#333"/><circle cx="3.5" cy="12.8" r="1.8" fill="#333"/><circle cx="3.5" cy="21.8" r="1.8" fill="#333"/><path d="M10 3.8 H29 M10 12.8 H29 M10 21.8 H29" stroke="#333" stroke-width="1.8"/></svg>
<svg style="position:absolute;left:2425px;top:620px;" width="30" height="34" viewBox="0 0 30 34" fill="none"><text x="2" y="12.5" font-family="Liberation Sans" font-size="9.5" font-weight="700" fill="#333">1</text><text x="1.8" y="21.8" font-family="Liberation Sans" font-size="9.5" font-weight="700" fill="#333">2</text><text x="1.8" y="31.2" font-family="Liberation Sans" font-size="9.5" font-weight="700" fill="#333">3</text><path d="M12 8.8 H27 M12 17 H27 M12 25 H27" stroke="#333" stroke-width="1.8"/></svg>
<svg style="position:absolute;left:2480px;top:624px;" width="32" height="26" viewBox="0 0 32 26" fill="none"><path d="M2.5 4.5 H21.5 M2.5 12 H29.5 M2.5 19.5 H13.5" stroke="#333" stroke-width="1.8"/></svg>
<svg style="position:absolute;left:2525px;top:633px;" width="14" height="11" viewBox="0 0 14 11" fill="none"><path d="M2 2.5 L7 7.5 L12 2.5" stroke="#333" stroke-width="2.4" stroke-linecap="round" stroke-linejoin="round"/></svg>
<svg style="position:absolute;left:2560px;top:624px;" width="32" height="26" viewBox="0 0 32 26" fill="none"><path d="M10 4.5 H24 M9 12 H30 M10 19.5 H20 M5 9 L2.5 12 L5 15" stroke="#333" stroke-width="1.8" stroke-linejoin="round"/></svg>
<svg style="position:absolute;left:2615px;top:624px;" width="32" height="26" viewBox="0 0 32 26" fill="none"><path d="M10 4.5 H24 M9 12 H30 M10 19.5 H20 M2.5 9 L5 12 L2.5 15" stroke="#333" stroke-width="1.8" stroke-linejoin="round"/></svg>
<div style="position:absolute;left:2671px;top:614px;width:2px;height:48px;background:#dcdcdc"></div>
<svg style="position:absolute;left:2698px;top:624px;" width="28" height="28" viewBox="0 0 28 28" fill="none"><rect x="3" y="3" width="22" height="22" rx="4" stroke="#333" stroke-width="2"/><path d="M3.5 21.5 L14 13.5 L24.5 21.5" stroke="#333" stroke-width="2" stroke-linejoin="round"/><circle cx="19" cy="8.5" r="1.9" fill="#333"/></svg>
<svg style="position:absolute;left:2741px;top:633px;" width="14" height="11" viewBox="0 0 14 11" fill="none"><path d="M2 2.5 L7 7.5 L12 2.5" stroke="#333" stroke-width="2.4" stroke-linecap="round" stroke-linejoin="round"/></svg>
<div style="position:absolute;left:2775.7px;top:633.5px;width:9.6px;height:9.6px;border-radius:50%;box-shadow:inset 0 0 0 1.8px #333"></div>
<div style="position:absolute;left:2787.2px;top:633.5px;width:9.6px;height:9.6px;border-radius:50%;box-shadow:inset 0 0 0 1.8px #333"></div>
<div style="position:absolute;left:2798.7px;top:633.5px;width:9.6px;height:9.6px;border-radius:50%;box-shadow:inset 0 0 0 1.8px #333"></div>
<div style="position:absolute;left:2802px;top:690px;width:30px;height:744px;background:#f9f9f9;box-shadow:inset 1.5px 0 0 #e6e6e6, inset -1.5px 0 0 #ececec"></div>
<div style="position:absolute;left:1490px;top:1410px;width:1314px;height:24px;background:#f9f9f9;box-shadow:inset 0 1.5px 0 #e6e6e6"></div>
</body></html>
